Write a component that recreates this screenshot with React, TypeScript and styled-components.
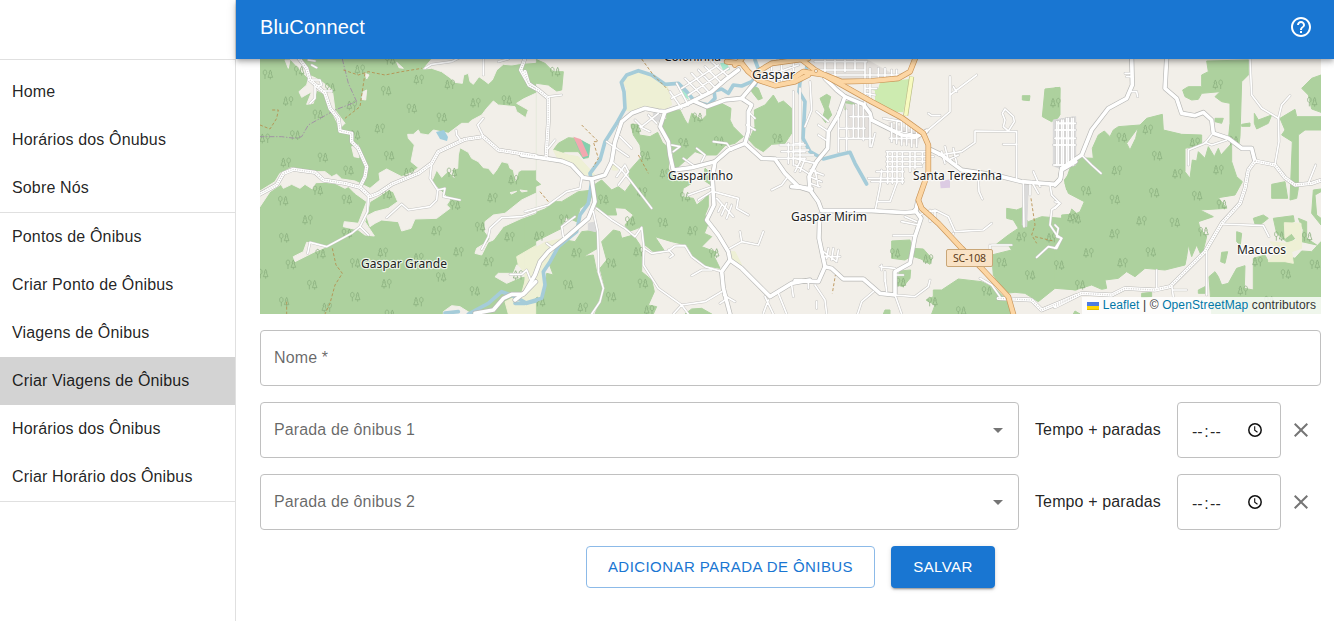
import React from 'react';
import styled, { createGlobalStyle } from 'styled-components';

const GlobalStyle = createGlobalStyle`
  *, *::before, *::after { box-sizing: border-box; }
  body {
    margin: 0;
    background: #fff;
    color: rgba(0, 0, 0, 0.87);
    font-family: "Liberation Sans", Arial, sans-serif;
    font-size: 16px;
    line-height: 24px;
  }
`;

const Layout = styled.div`
  display: flex;
  height: 621px;
  overflow: hidden;
`;

const Sidebar = styled.nav`
  flex: 0 0 236px;
  border-right: 1px solid #e0e0e0;
`;

const SidebarTop = styled.div`
  height: 60px;
  border-bottom: 1px solid #e0e0e0;
`;

const NavList = styled.ul<{ $first?: boolean }>`
  list-style: none;
  margin: 0;
  padding: ${(p) => (p.$first ? '8px 0 0' : '0')};
  border-bottom: 1px solid #e0e0e0;
`;

const NavItem = styled.li<{ $active?: boolean }>`
  height: 48px;
  padding: 12px;
  white-space: nowrap;
  letter-spacing: 0.15px;
  background: ${(p) => (p.$active ? '#d3d3d3' : 'transparent')};
`;

const Page = styled.div`
  flex: 1;
  min-width: 0;
  display: flex;
  flex-direction: column;
`;

const AppBar = styled.header`
  position: relative;
  z-index: 2;
  flex: 0 0 59px;
  display: flex;
  align-items: center;
  justify-content: space-between;
  padding: 0 21px 5px 24px;
  background: #1976d2;
  color: #fff;
  box-shadow: 0 2px 4px -1px rgba(0, 0, 0, 0.2), 0 4px 5px rgba(0, 0, 0, 0.14),
    0 1px 10px rgba(0, 0, 0, 0.12);
`;

const Title = styled.h1`
  margin: 0;
  font-size: 20px;
  font-weight: 500;
  line-height: 32px;
  letter-spacing: 0.15px;
`;

const Content = styled.main`
  display: flex;
  flex-direction: column;
  gap: 16px;
  padding: 0 13px 0 24px;
`;

const MapFrame = styled.div`
  position: relative;
  height: 255px;
  overflow: hidden;
  background: #f2efe9;
  svg { display: block; }
`;

const Attribution = styled.div`
  position: absolute;
  right: 0;
  bottom: 0;
  display: flex;
  align-items: center;
  height: 17px;
  padding: 0 5px;
  background: rgba(255, 255, 255, 0.8);
  color: #333;
  font-size: 12px;
  line-height: 17px;
  letter-spacing: 0.12px;
  white-space: pre;
  svg { margin-right: 4px; }
`;

const MapLink = styled.a`
  color: #0078a8;
`;

const Outlined = styled.div<{ $width?: number }>`
  display: flex;
  align-items: center;
  justify-content: space-between;
  height: 56px;
  flex: ${(p) => (p.$width ? `0 0 ${p.$width}px` : '1 0 auto')};
  padding: 0 13px;
  border: 1px solid #c0c0c0;
  border-radius: 4px;
`;

const Placeholder = styled.span`
  color: rgba(0, 0, 0, 0.6);
  letter-spacing: 0.13px;
`;

const StopRow = styled.div`
  display: flex;
  align-items: center;
  height: 56px;
`;

const StopLabel = styled.span`
  margin: 0 16px;
  width: 126px;
  white-space: nowrap;
  letter-spacing: 0.12px;
`;

const TimeValue = styled.span`
  display: flex;
  gap: 1.5px;
  padding: 3px 0 0 1px;
`;

const IconButton = styled.button`
  display: flex;
  width: 40px;
  padding: 8px;
  border: 0;
  background: none;
  color: #757575;
`;

const Actions = styled.div`
  display: flex;
  justify-content: center;
  gap: 16px;
`;

const Button = styled.button<{ $filled?: boolean }>`
  flex: 0 0 ${(p) => (p.$filled ? '104px' : '289px')};
  height: 42px;
  padding: 0 0 1px;
  border: ${(p) => (p.$filled ? '0' : '1px solid #8cbae8')};
  border-radius: 4px;
  background: ${(p) => (p.$filled ? '#1976d2' : '#fff')};
  color: ${(p) => (p.$filled ? '#fff' : '#1976d2')};
  font: 500 15px "Liberation Sans", Arial, sans-serif;
  letter-spacing: 0.43px;
  text-transform: uppercase;
  white-space: nowrap;
  box-shadow: ${(p) =>
    p.$filled
      ? '0 3px 1px -2px rgba(0,0,0,.2), 0 2px 2px rgba(0,0,0,.14), 0 1px 5px rgba(0,0,0,.12)'
      : 'none'};
`;

/* The map is divided in four tiles, each with its own three-times-finer grid. */
interface Tile {
  x: number;
  wood: string[];
  clear?: string[];
  field?: string[];
  built?: string[];
  river?: string[];
  main: string[];
  dirt?: string[];
  minor: string[];
  track?: string[];
  border?: string[];
  trunk?: string[];
  trees: [number, number][];
}

const tiles: Tile[] = [
  {
    x: -5,
    wood: ['15,0 842,0 842,777 15,777'],
    clear: [
      '505,42 530,12 842,8 842,22 800,25 770,30 745,28 725,45 712,75 700,86 690,78 672,65 655,88 645,80 640,55 626,60 622,85 600,82 585,68 560,50 530,40',
      '458,238 475,238 490,225 496,236 520,240 535,225 580,235 620,205 640,205 650,196 680,180 695,160 715,138 730,150 780,155 785,170 800,180 812,188 820,165 785,145 805,132 842,115 842,345 800,345 790,350 782,378 775,345 765,340 760,325 740,320 725,345 715,358 700,340 685,338 670,320 650,310 640,292 615,278 610,300 608,340 590,345 598,368 580,348 560,367 545,345 530,380 550,400 585,435 575,450 585,460 545,490 480,492 468,520 440,528 430,500 380,495 360,505 345,515 335,483 360,470 400,460 428,440 415,410 400,405 370,425 345,440 330,500 358,543 330,540 310,525 265,515 268,500 310,505 335,440 300,415 280,395 270,400 240,385 210,382 182,383 172,402 150,388 135,400 110,388 85,400 78,388 45,410 15,455 15,408 60,380 75,355 110,338 180,350 210,350 230,365 245,358 260,372 300,378 345,400 375,375 372,355 395,342 440,365 475,350 490,338 468,320 478,270 460,250',
      '105,12 130,12 150,30 160,60 180,68 200,80 232,105 240,165 270,205 255,220 235,180 225,150 205,115 185,105 175,145 155,148 170,110 140,127 132,110 155,90 160,70',
      '290,275 310,270 312,308 297,305', '330,55 342,60 335,72', '325,110 335,105 332,135 320,133', '425,22 445,40 432,38',
      '155,562 180,565 215,575 180,590 120,620 115,605 145,590',
      '842,415 800,435 750,475 715,480 690,500 690,530 705,550 690,580 680,600 660,595 665,580 690,565 715,555 745,515 800,490 842,475',
      '730,655 775,655 785,630 842,640 842,660 800,665 755,685 720,665',
      '565,770 590,752 615,755 650,777 565,777', '90,15 105,15 100,40', '765,413 785,409 770,417', '795,405 817,408 800,411',
    ],
    field: ['785,605 842,572 842,777 760,777 750,740 800,715 815,660 790,630'],
    river: ['M640,777 L700,745 740,710 780,725 815,745 842,738', 'M570,774 L610,770'],
    main: ['M660,775 L715,765 745,730 770,718 805,718 842,680'],
    dirt: [
      'M130,8 L155,40 165,75 210,115 225,160 250,190 255,228 290,235 290,260 310,280 335,335 330,365 315,395',
      'M10,420 L65,390 85,355 115,343 180,352 205,375 270,385 315,397 345,425 370,415 410,388 490,355 530,325 550,290 630,253 685,245 730,285 842,303',
      'M810,10 L797,45 820,85 842,100',
    ],
    minor: [
      'M530,325 L525,370 548,405 545,435 525,455 460,465 440,447 395,488', 'M548,405 L570,400 565,425 615,435',
      'M340,425 L338,470 315,515 290,535 215,575 165,562 158,595', 'M315,515 L340,540',
      'M685,245 L668,210 685,190', 'M603,225 L605,240 618,257', 'M510,40 L530,28 590,20 610,10', 'M685,12 V60',
      'M842,470 L800,485 740,488 705,520 700,545 680,583', 'M765,658 L800,658 815,645 828,678',
      'M160,75 L195,75 200,90 180,95 180,130 165,145', 'M170,30 L185,38 M205,108 L230,108 M160,15 L180,18 M730,20 L760,12',
    ],
    track: [
      'M265,45 L310,60 340,50 390,60 440,50 500,40', 'M330,55 L315,155 270,190', 'M15,210 L45,222 65,190 70,165 50,165',
      'M232,580 L243,630 262,655 240,690 225,745 210,777', 'M95,740 V777',
    ],
    border: ['M262,12 L280,85 305,140 240,165 160,210 140,245 120,250 80,245 15,245'],
    trees: [[38,58],[132,47],[225,98],[100,138],[188,178],[120,240],[30,250],[315,43],[492,73],[393,107],[585,88],[470,160],[560,187],[662,143],[755,135],[375,220],[402,302],[203,307],[93,322],[280,346],[188,406],[84,437],[275,433],[158,494],[87,548],[107,628],[384,592],[300,624],[491,608],[545,527],[611,590],[701,620],[764,545],[675,515],[713,428],[776,374],[558,666],[395,686],[171,689],[300,725],[87,740],[491,740],[659,708],[216,757],[404,778],[291,151],[405,15],[24,656],[462,352],[600,450],[790,660],[196,596],[590,352],[395,418],[300,240],[275,535]],
  },
  {
    x: 265,
    wood: [
      '0,22 30,12 60,25 85,50 115,50 110,105 95,108 70,90 35,85 15,100 0,80', '0,100 12,110 0,130', '0,150 10,182 0,188',
      '85,285 100,265 130,248 150,250 195,270 190,308 175,310 160,290 120,290 105,295', '0,348 18,350 25,370 47,388 30,395 20,415 0,412',
      '0,485 60,462 90,440 110,440 160,410 205,405 195,440 165,460 155,500 120,485 110,520 60,545 0,575',
      '318,208 340,208 343,240 375,245 398,232 412,262 432,280 430,345 450,365 500,385 475,400 470,425 505,430 515,450 540,430 550,418 550,455 540,480 550,505 538,535 560,545 530,575 575,592 568,605 585,640 540,632 505,605 485,570 440,560 390,545 420,590 385,590 360,570 350,515 338,520 310,530 300,510 325,480 300,460 270,458 275,480 240,480 215,465 207,390 230,375 260,405 280,395 300,410 318,385 310,350 350,305 345,270 325,240',
      '415,200 425,190 425,170 465,165 480,195 490,210 500,175 530,195 545,180 545,155 580,140 618,160 615,195 625,215 655,245 630,265 600,272 575,300 540,300 510,290 450,345 440,270 412,240',
      '688,165 720,150 745,120 760,145 775,138 800,160 803,230 780,265 740,268 715,290 690,275 672,255 690,215',
      '215,525 218,580 175,605 205,600 215,650 230,690 235,700 215,750 197,777 0,777 0,755 50,735 60,690 65,655 85,660 70,620 100,570 120,555 150,560 170,530',
      '230,560 265,525 285,530 290,550 325,540 345,570 350,600 350,650 380,675 388,710 370,750 395,755 385,777 210,777 240,700 225,640 245,615',
      '480,777 500,762 530,760 560,777', '680,90 700,100 712,130 700,135 680,110', '540,340 565,360 558,390 535,375',
    ],
    field: ['300,165 305,100 292,80 305,60 340,50 425,85 440,150 415,165 360,158 320,170', '85,285 130,300 160,305 210,360 175,360 135,325 100,315', '0,597 60,562 115,550 75,615 60,650 45,730 0,742', '610,590 630,590 650,630 620,615', '260,330 275,330 278,345 262,345'],
    built: ['190,505 215,500 212,530 190,525', '385,175 405,165 405,200 385,195'],
    river: ['M-30,745 L0,745 50,730 60,690 55,650 75,620 100,575 155,530 165,480 190,445 200,380 195,355 225,315 240,260 275,205 300,160 297,110 289,82 305,60 340,47 380,60 420,88 460,85 485,110 510,140 550,150 570,130 567,108 590,102 610,115 625,90 650,93 680,80 700,60', 'M690,15 L705,55 690,90'],
    main: [
      'M-10,300 L60,310 110,318 140,330 175,368 200,372 240,360 260,320 270,260 290,200 320,175 360,160 400,168 420,170 480,150 560,110 600,75 640,45',
      'M420,170 L405,215 430,260 435,300 445,345 500,338 570,320 610,285 660,265 670,230 670,170 680,150 650,130 600,135 545,155 510,140',
      'M650,130 L700,70', 'M660,265 L710,310 750,312 780,355 820,395 860,402',
      'M570,320 L562,370 567,450 545,495 580,540 610,590 615,615 650,640 735,725 800,685 855,675', 'M615,615 L590,650 595,700 615,777',
      'M200,372 L210,440 190,490 120,550 70,590 45,620 30,660 0,712 -30,735',
    ],
    dirt: ['M0,50 L12,90 40,105 70,130 70,200 63,310'],
    minor: [
      'M70,125 L110,120', 'M70,280 L90,255', 'M0,470 L70,450 125,410 165,400 170,370', 'M215,460 L260,495 300,520 330,545 350,517 357,580 355,630 400,700 470,750 540,740 590,710',
      'M357,580 L380,595 430,588 450,573 480,572 500,605 540,635 590,650', 'M430,585 L445,600 435,607', 'M560,645 L530,645 500,662',
      'M470,750 L445,777 M470,750 L490,777 M720,725 L745,777 M715,775 L730,735 M760,715 L785,777 M800,690 L805,725',
      'M205,470 L218,530 220,600 220,650 235,700 225,740 200,777', 'M260,320 L290,345 315,375 380,460', 'M275,365 L300,330 310,350 280,390', 'M245,260 L310,305 M285,245 L320,280',
      'M330,195 L350,215 400,175 M345,215 L375,230 M370,180 L395,205', 'M435,110 L470,160 M455,85 L490,150 M440,130 L470,115',
      'M115,545 L110,515 150,485 M65,565 L85,580', 'M615,580 L650,560 700,570 715,530 M650,560 L645,530', 'M490,420 L560,395 M520,435 L560,410 M565,410 L640,430 635,460 670,480 M575,430 L625,485 M590,450 L580,470 M605,445 L590,480 M620,450 L605,490',
      'M440,270 L465,275 445,290 M515,280 L540,300 530,320 M565,260 L605,265 620,285 M475,310 L510,335', 'M480,70 L530,120 M500,55 L550,110 M520,45 L570,98 M540,35 L590,85 M560,20 L610,65 M470,100 L580,30 M490,120 L610,40',
      'M765,270 H840 M770,290 H840 M750,310 H840 M790,265 V325 M805,110 V330 M825,100 V320 M740,405 L770,390 785,370', 'M710,50 L760,15 M720,65 L820,30 M755,75 L835,55 M740,20 V45 M770,15 V85 M805,15 V70', 'M595,720 L630,740 M600,735 L585,745 M670,170 L690,190 M665,210 L690,225',
    ],
    track: ['M170,210 L220,260 205,260 220,310 205,335', 'M350,12 L385,60 430,105', 'M340,300 L370,355', 'M45,410 L70,440'],
    trunk: ['M605,20 L650,25 670,50 700,75 750,92 810,80 850,60', 'M630,30 L650,12', 'M690,55 L740,25 850,10'],
    trees: [[90,50],[360,302],[475,263],[517,187],[757,250],[582,258],[235,433],[117,492],[43,543],[315,498],[413,502],[503,527],[155,593],[258,624],[341,590],[129,689],[353,685],[258,725],[174,757],[45,740],[420,355],[352,411],[480,425],[373,765],[332,220],[567,594]],
  },
  {
    x: 535,
    wood: [
      '75,130 95,118 107,125 100,155 110,180 92,203 82,190 90,165', '290,558 345,555 350,580 385,582 410,610 405,628 378,612 350,603 330,615 290,610', '315,648 347,645 345,670 325,695 305,690 305,670',
      '393,735 415,725 415,705 440,705 490,672 560,680 600,700 640,740 650,777 410,777 420,750', '605,567 640,540 670,520 655,495 635,490 635,460 665,465 690,455 690,490 700,500 740,485 800,490 845,505 845,705 780,700 730,740 690,715 660,712 630,715 595,660 590,600 650,585 640,570',
      '682,122 705,122 703,137 682,135', '750,102 795,97 795,180 770,200 742,185', '808,375 842,330 842,420 815,405', '150,140 178,140 178,165 150,165', '140,40 168,60 155,62', '270,765 285,765 285,777 265,777',
    ],
    field: [],
    built: ['775,195 842,185 842,330 800,345 775,330', '685,390 700,390 695,515 682,510'],
    river: ['M38,20 L32,55 15,80 12,110 30,140 24,250 45,290 85,312 130,300 165,292 180,325 215,387'],
    main: [
      'M90,70 L125,105 150,125 205,148 225,175 230,195 270,215 320,240 365,245 395,228', 'M150,125 L130,180 100,230 98,280 65,320 42,365 45,405 70,440 80,467 230,467 330,473 362,470 368,440',
      'M-10,395 L15,397 42,405', 'M74,480 L72,550 90,635 70,680 0,677', 'M90,635 L110,640 145,672 205,672 255,715 300,720 300,650 345,625 360,545 378,490 360,465',
      'M405,283 L440,300 500,345 600,360 680,380 780,388 797,370 800,345 842,320',
    ],
    dirt: ['M610,730 L710,735 740,765 800,740 842,722'],
    minor: [
      'M465,65 V170 L400,225 M465,120 L545,60 M475,95 L485,110', 'M400,175 L410,182 435,182', 'M430,300 L500,290 540,262 540,228 665,230 665,370', 'M640,228 L625,215 630,195 622,175 630,162 655,185 658,200 640,228', 'M625,268 H665',
      'M550,370 L552,410 562,432', 'M685,380 L687,515 M710,380 L730,415 M715,350 L735,395 M705,390 V420', 'M765,390 L770,420 795,445 770,465 765,510 785,540 800,550 785,580 760,575 725,607',
      'M130,170 V290 M155,165 V285 M175,150 V250 M190,145 V250 M205,155 V255 M225,185 V275 M130,250 H235 M130,220 H210 M165,185 H225 M240,235 L230,275',
      'M275,290 H400 M275,305 H415 M275,320 H400 M275,335 H380 M245,350 H325 M220,370 H325 M230,380 H325 M278,290 V385 M292,290 V385 M306,290 V385 M322,290 V385 M345,290 V350 M360,290 V340 M382,290 V325 M260,345 L255,395 242,460 M305,385 L285,440 250,440',
      'M290,205 V260 M305,200 V265 M320,200 V270 M335,205 V270 M350,210 V275 M365,220 V275 M265,190 L320,200 M285,250 H360 M295,225 L370,240',
      'M0,310 L60,325 M0,330 L40,355 M15,320 L0,350 M30,310 L15,350 M0,265 H25 M0,285 H40 M0,300 L55,300 M45,345 L85,360 M45,365 L80,380 M45,385 L75,395 M60,345 L70,395',
      'M370,480 L420,465 460,485 480,530 565,525 590,505 M330,485 L365,500 M320,500 L370,510 M295,542 H360 M420,465 V500 M405,465 V500 M475,535 L470,550',
      'M85,590 L125,620 M100,580 L95,610 M115,580 L110,615 M130,585 L125,620 M80,605 H135', 'M255,635 L300,640 M260,630 V645 M270,650 V680 M300,720 L360,725 400,695 405,675 M300,660 H325 M300,720 L320,777 M235,710 L200,740 188,777 M270,670 L275,710',
      'M60,690 L90,735 95,777 M40,680 V700 M65,740 V760', 'M590,570 H650 M585,570 V610 M555,670 L590,690 615,725',
      'M55,45 H210 M80,60 H320 M120,75 H210 M210,20 V150 M225,40 V130 M250,40 V75 M270,40 V75 M290,45 V75 M305,45 V75 M60,20 H215 M90,15 V60 M120,15 V65 M150,15 V50 M180,15 V45 M210,100 H245 M210,115 L240,120',
      'M45,80 L50,165 30,215 M65,170 L100,200 M70,210 L100,230 M70,240 L100,260', 'M785,205 H842 M780,225 H842 M780,250 H842 M775,270 H842 M775,330 H820 M790,200 V330 M805,195 V330 M820,190 V330 M835,190 V330', 'M450,275 L460,315 490,300 M475,280 L485,325 M440,290 L450,325',
    ],
    track: ['M708,430 L720,510 710,540 725,565 M720,545 L775,558', 'M122,655 L112,715'],
    trunk: ['M15,10 L60,45 150,95 230,140 320,188 385,235 400,270 400,350 370,435 380,460 430,505 500,580 560,640 640,725 655,777', 'M-5,70 L25,50 90,60 140,80 230,78 310,70 345,50 360,12'],
    trees: [[782,143],[680,545],[770,548],[705,660],[792,630],[620,622],[575,708],[498,768],[300,594],[400,612],[317,682],[412,740],[833,488]],
  },
  {
    x: 795,
    wood: [
      '30,385 45,340 75,308 115,310 112,280 130,240 148,228 165,245 175,225 190,215 255,210 215,265 225,285 242,250 250,215 275,190 322,178 325,225 380,238 440,240 440,270 390,280 390,350 405,370 412,315 425,318 430,290 450,310 460,275 478,305 490,280 498,300 530,265 530,320 545,365 562,380 540,420 490,428 515,460 435,465 475,485 430,500 435,520 455,545 440,605 425,570 410,605 400,570 395,605 390,630 330,645 270,640 240,665 215,650 190,670 150,675 155,700 140,703 110,690 60,705 0,692 0,490 20,492 20,480 45,478 50,462 65,475 75,470 88,440 40,415',
      '0,98 15,100 12,185 0,198', '383,105 400,95 440,95 440,60 460,50 455,18 580,15 580,60 560,80 555,245 550,280 520,255 525,205 525,145 500,140 480,125 495,110 440,115 430,133 410,135 390,125',
      '598,175 610,195 650,180 640,205 605,222 598,205', '740,100 770,70 798,60 798,172 770,162 760,120', '675,190 720,163 725,185 798,185 798,225 750,225 730,240 730,400 725,430 705,435 712,260 680,240 690,225', '650,388 690,380 698,430 650,430',
      '775,405 798,402 798,410 780,420 785,480 798,490 798,510 770,475', '480,190 505,190 500,205 480,200', '595,490 625,480 640,490 615,510 600,507', '655,490 715,482 718,500 685,510 720,550 700,565 665,535', '730,490 755,500 755,550 785,570 740,560 745,525', '500,592 518,590 510,625 497,620', '545,530 560,535 556,570 545,560', '560,208 585,204 585,214 560,214',
      '462,665 480,650 490,665 500,690 520,685 545,640 570,632 568,700 595,705 595,610 630,600 640,620 670,610 680,600 720,610 740,588 770,590 798,560 798,777 470,777', '430,705 450,695 450,715 430,715', '260,715 290,712 290,725 260,728', '60,768 75,777 55,777',
    ],
    field: ['688,503 738,505 740,580 710,590 715,625 690,620 640,620 665,585 645,560 690,565 725,555 710,535 690,550'],
    built: ['0,200 55,185 62,300 30,340 0,335'],
    main: [
      'M230,10 L232,90 215,130 160,160 110,225 80,300 20,340 15,375 0,390', 'M335,10 L330,100 365,130 380,175 420,182 445,172 470,195 475,235 520,250 560,280 590,280 600,320',
    ],
    dirt: ['M600,318 L660,330 690,368 720,390 770,385 800,375', 'M600,318 L580,345 570,400 555,445 500,505 450,590 390,650 345,695 300,705 210,700 170,720 80,715 0,755'],
    minor: [
      'M585,10 L590,120 620,160 670,190 672,260 660,328', 'M670,190 L680,150 705,122', 'M500,507 L625,512 642,545', 'M455,590 L455,720', 'M305,645 V700 M350,690 L355,725 M355,705 L395,705', 'M470,240 L450,265 400,285 400,330 M450,262 L470,270 515,255',
      'M80,300 L110,330 138,355', 'M760,385 L782,330', 'M230,110 L245,110 248,125 M210,55 H225 M215,65 H228', 'M10,205 H50 M5,225 H52 M0,250 H55 M0,270 H58 M0,330 H30 M5,200 V330 M20,195 V330 M35,190 V330 M50,190 V315', 'M0,510 L10,520 5,545 20,550 0,580', 'M0,440 L15,445 0,460',
    ],
    trees: [[200,247],[279,223],[306,302],[186,346],[368,356],[491,344],[420,262],[93,407],[179,433],[297,413],[426,422],[62,492],[260,497],[359,502],[179,536],[101,593],[287,591],[203,623],[75,689],[489,88],[771,140],[672,543],[608,620],[692,657],[564,706],[779,628],[756,545],[500,448],[445,530],[642,737],[535,257]],
  },
];

type PathKind = 'river' | 'main' | 'dirt' | 'minor' | 'track' | 'border' | 'trunk';
type AreaKind = 'wood' | 'clear' | 'field' | 'built';

const tileTransform = (x: number) => `translate(${x} -4) scale(.333333)`;

const Areas = ({ kind, fill }: { kind: AreaKind; fill: string }) => (
  <>
    {tiles.map((t) => (
      <g key={t.x} transform={tileTransform(t.x)} fill={fill} stroke={fill} strokeWidth={3} strokeLinejoin="round">
        {(t[kind] ?? []).map((points) => <polygon key={points} points={points} />)}
      </g>
    ))}
  </>
);

const Lines = ({ kind, color, width, dash }: { kind: PathKind; color: string; width: number; dash?: string }) => (
  <>
    {tiles.map((t) => (
      <g key={t.x} transform={tileTransform(t.x)} fill="none" stroke={color} strokeWidth={width} strokeDasharray={dash} strokeLinejoin="round" strokeLinecap={dash ? 'butt' : 'round'}>
        {(t[kind] ?? []).map((d) => <path key={d} d={d} />)}
      </g>
    ))}
  </>
);

const TREE_A = 'M-8,14 V2 M-8,2 C-15,2 -15,-13 -8,-13 C-1,-13 -1,2 -8,2 M8,15 V9 M8,-13 L4,-4 H6 L1,9 H15 L10,-4 H12 Z';
const TREE_B = 'M8,14 V2 M8,2 C15,2 15,-13 8,-13 C1,-13 1,2 8,2 M-8,15 V9 M-8,-13 L-4,-4 H-6 L-1,9 H-15 L-10,-4 H-12 Z';

const Trees = () => (
  <>
    {tiles.map((t) => (
      <g key={t.x} transform={tileTransform(t.x)} fill="none" stroke="#8aaf7f" strokeWidth={2.3}>
        {t.trees.map(([x, y], i) => (
          <path key={i} transform={`translate(${x} ${y})`} d={(x + y) % 3 === 1 ? TREE_B : TREE_A} />
        ))}
      </g>
    ))}
  </>
);

const places: [string, number, number, number, number?][] = [
  ['Coloninha', 404, 2, 57], ['Gaspar', 492, 20, 43, 13], ['Gasparinho', 408, 121, 65], ['Santa Terezinha', 653, 121, 89],
  ['Gaspar Mirim', 531, 162, 76], ['Gaspar Grande', 101, 209, 86], ['Macucos', 977, 195, 49],
];

const RegionMap = () => (
  <svg width="1061" height="255" viewBox="0 0 1061 255">
    <rect width="1061" height="255" fill="#f2efe9" />
    <Areas kind="wood" fill="#add19e" />
    <Areas kind="clear" fill="#f2efe9" />
    <Areas kind="field" fill="#eef0d5" />
    <Areas kind="built" fill="#dadada" />
    <g transform={tileTransform(265)}>
      <path d="M170,255 L195,270 192,305 175,312 150,260Z" fill="#84cfae" />
      <path d="M145,245 L168,253 190,302 173,307Z" fill="#f3a8b0" />
      <path d="M585,25 L605,22 615,45 595,48Z M465,98 L480,98 492,135 475,122Z" fill="#a9ecd1" />
    </g>
    <g transform={tileTransform(535)}>
      <path d="M215,98 L250,100 255,82 343,72 325,172 290,170 240,140 240,107Z" fill="#cdebb0" />
      <path d="M435,380 L465,372 465,398 437,400Z" fill="#dccbe3" />
      <path d="M0,12 L215,12 300,60 210,75 130,75 60,45Z M150,145 L230,160 230,250 165,250Z M280,200 L380,235 370,270 290,255Z" fill="#e4e0dc" />
    </g>
    <Trees />
    <path d="M176,73 L184,71 188,78 187,82 180,80Z" fill="#9fcddd" />
    <Lines kind="river" color="#a5ccd9" width={11} />
    <Lines kind="border" color="#a293a5" width={3} dash="16 5 4 5" />
    <Lines kind="track" color="#b58b4a" width={2.5} dash="9 6" />
    <Lines kind="minor" color="#c6c5c3" width={8} />
    <Lines kind="main" color="#b8b8b6" width={15} />
    <Lines kind="dirt" color="#b9b8b5" width={13} />
    <Lines kind="minor" color="#fff" width={5} />
    <Lines kind="main" color="#fff" width={11} />
    <Lines kind="dirt" color="#fff" width={10} />
    <Lines kind="dirt" color="#d6d4d2" width={4} dash="3 4" />
    <g transform={tileTransform(535)} fill="none">
      <path d="M350,65 L332,182" stroke="#b8bc83" strokeWidth="15" />
      <path d="M350,65 L332,182" stroke="#f7fabf" strokeWidth="11" />
    </g>
    <Lines kind="trunk" color="#ca9558" width={17} />
    <Lines kind="trunk" color="#fcd6a4" width={13} />
    <circle cx="556" cy="12" r="1.6" fill="#f2efe9" stroke="#ca9558" strokeWidth=".7" />
    <rect x="686.5" y="190.5" width="46" height="17" rx="1.5" fill="#f9e2c5" stroke="#c9a677" />
    <text x="693" y="203" fontSize="10.5" textLength="33" fontFamily='"Noto Sans", sans-serif' fill="#5b3b18">SC-108</text>
    <g fontFamily='"Noto Sans", sans-serif' fill="#222" stroke="#fff" strokeOpacity=".75" strokeWidth="2.4" strokeLinejoin="round" paintOrder="stroke">
      {places.map(([name, x, y, width, size]) => (
        <text key={name} x={x} y={y} textLength={width} fontSize={size ?? 12}>{name}</text>
      ))}
    </g>
  </svg>
);

const Flag = () => (
  <svg width="12" height="8" viewBox="0 0 12 8">
    <path fill="#4C7BE1" d="M0 0h12v4H0z" />
    <path fill="#FFD500" d="M0 4h12v3H0z" />
    <path fill="#E0BC00" d="M0 7h12v1H0z" />
  </svg>
);

const HelpIcon = () => (
  <svg width="24" height="24" viewBox="0 0 24 24" fill="currentColor">
    <path d="M11 18h2v-2h-2zm1-16C6.48 2 2 6.48 2 12s4.48 10 10 10 10-4.48 10-10S17.52 2 12 2m0 18c-4.41 0-8-3.59-8-8s3.59-8 8-8 8 3.59 8 8-3.59 8-8 8m0-14c-2.21 0-4 1.79-4 4h2c0-1.1.9-2 2-2s2 .9 2 2c0 2-3 1.75-3 5h2c0-2.25 3-2.5 3-5 0-2.21-1.79-4-4-4" />
  </svg>
);

const CloseIcon = () => (
  <svg width="24" height="24" viewBox="0 0 24 24" fill="currentColor">
    <path d="M19 6.41 17.59 5 12 10.59 6.41 5 5 6.41 10.59 12 5 17.59 6.41 19 12 13.41 17.59 19 19 17.59 13.41 12z" />
  </svg>
);

const ArrowIcon = () => (
  <svg width="14" height="24" viewBox="5 0 14 24" fill="#757575">
    <path d="m7 10 5 5 5-5z" />
  </svg>
);

const ClockIcon = () => (
  <svg width="24" height="16" viewBox="0 0 24 16" fill="none" stroke="#111">
    <circle cx="12" cy="8" r="6.2" strokeWidth="1.5" />
    <path d="M11.7 4.2V8.2L14.5 10.3" strokeWidth="1.1" />
  </svg>
);

const Stop = ({ index }: { index: number }) => (
  <StopRow>
    <Outlined>
      <Placeholder>Parada de ônibus {index}</Placeholder>
      <ArrowIcon />
    </Outlined>
    <StopLabel>Tempo + paradas</StopLabel>
    <Outlined $width={104}>
      <TimeValue><span>--</span><span>:</span><span>--</span></TimeValue>
      <ClockIcon />
    </Outlined>
    <IconButton aria-label="Remover"><CloseIcon /></IconButton>
  </StopRow>
);

const publicLinks = ['Home', 'Horários dos Ônubus', 'Sobre Nós'];
const adminLinks = ['Pontos de Ônibus', 'Criar Ponto de Ônibus', 'Viagens de Ônibus', 'Criar Viagens de Ônibus', 'Horários dos Ônibus', 'Criar Horário dos Ônibus'];

export default function App() {
  return (
    <>
      <GlobalStyle />
      <Layout>
        <Sidebar>
          <SidebarTop />
          <NavList $first>{publicLinks.map((l) => <NavItem key={l}>{l}</NavItem>)}</NavList>
          <NavList>
            {adminLinks.map((l) => <NavItem key={l} $active={l === 'Criar Viagens de Ônibus'}>{l}</NavItem>)}
          </NavList>
        </Sidebar>
        <Page>
          <AppBar><Title>BluConnect</Title><HelpIcon /></AppBar>
          <Content>
            <MapFrame>
              <RegionMap />
              <Attribution>
                <Flag /><MapLink>Leaflet</MapLink>{' | © '}<MapLink>OpenStreetMap</MapLink>{' contributors'}
              </Attribution>
            </MapFrame>
            <Outlined><Placeholder>Nome *</Placeholder></Outlined>
            <Stop index={1} />
            <Stop index={2} />
            <Actions>
              <Button>Adicionar parada de ônibus</Button>
              <Button $filled>Salvar</Button>
            </Actions>
          </Content>
        </Page>
      </Layout>
    </>
  );
}
